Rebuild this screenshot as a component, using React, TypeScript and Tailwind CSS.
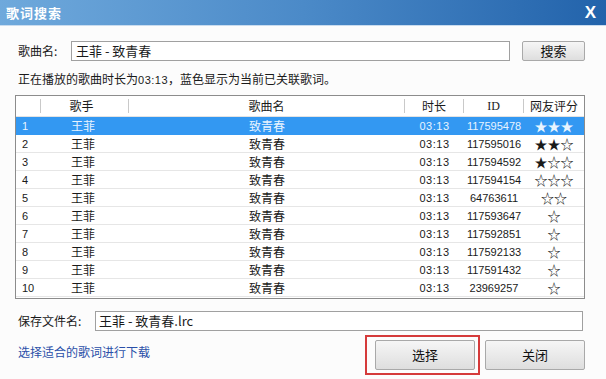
import React from 'react';

const font = { fontFamily: '"Noto Sans CJK SC", "Liberation Sans", sans-serif' };
const num = { fontFamily: '"Liberation Sans", sans-serif' };

type Row = { n: number; id: string; stars: string };

const rows: Row[] = [
  { n: 1, id: '117595478', stars: '★★★' },
  { n: 2, id: '117595016', stars: '★★☆' },
  { n: 3, id: '117594592', stars: '★☆☆' },
  { n: 4, id: '117594154', stars: '☆☆☆' },
  { n: 5, id: '64763611', stars: '☆☆' },
  { n: 6, id: '117593647', stars: '☆' },
  { n: 7, id: '117592851', stars: '☆' },
  { n: 8, id: '117592133', stars: '☆' },
  { n: 9, id: '117591432', stars: '☆' },
  { n: 10, id: '23969257', stars: '☆' },
];

const cols = 'grid grid-cols-[25px_88px_276px_59px_60px_1fr]';
const btnCls =
  'flex items-center justify-center border border-[#a9a9a9] rounded-[2px] bg-gradient-to-b from-[#f6f6f6] to-[#dedede] text-[13px] text-[#111]';

export default function App() {
  return (
    <div style={font} className="w-[606px] h-[379px] bg-[#fcfcfc] flex flex-col overflow-hidden text-[12px] text-[#1a1a1a]">
      {/* title bar */}
      <div className="h-[26px] flex items-center justify-between pl-[6px] pr-[10px] bg-gradient-to-r from-[#6fa9dc] via-[#4b8ac8] to-[#2263ab] border-b border-[#c9dcef]">
        <span className="text-white font-bold text-[13px] tracking-[1px]">歌词搜索</span>
        <span className="text-white font-bold text-[17px]" style={num}>X</span>
      </div>

      <div className="flex flex-col pl-[15px] pr-[21px] pt-[15px]">
        {/* song name row */}
        <div className="flex items-center h-[20px]">
          <span className="w-[56px] pl-[3px]">歌曲名:</span>
          <div className="w-[439px] h-[20px] border border-[#a0a0a0] bg-white flex items-center pl-[4px] text-[13px]">王菲 - 致青春</div>
          <button className={`${btnCls} ml-[12px] w-[63px] h-[20px] text-[12px]`}>搜索</button>
        </div>

        <div className="mt-[10px] pl-[3px] leading-[16px]">
          正在播放的歌曲时长为<span className="text-[11px] tracking-[0.5px]" style={num}>03:13</span>，蓝色显示为当前已关联歌词。
        </div>

        {/* result table */}
        <div className="mt-[7px] w-[570px] h-[204px] border border-[#8c8c8c] bg-white flex flex-col">
          <div className={`${cols} h-[21px] items-center border-b border-[#e3e3e3]`}>
            <div className="h-[14px] border-r border-[#c9c9c9]" />
            <div className="h-[14px] flex items-center justify-center border-r border-[#c9c9c9] pr-[6px]">歌手</div>
            <div className="h-[14px] flex items-center justify-center border-r border-[#c9c9c9]">歌曲名</div>
            <div className="h-[14px] flex items-center justify-center border-r border-[#c9c9c9]">时长</div>
            <div className="h-[14px] flex items-center justify-center border-r border-[#c9c9c9]" style={{ fontFamily: '"Liberation Serif", serif' }}>ID</div>
            <div className="h-[14px] flex items-center justify-center">网友评分</div>
          </div>
          {rows.map(r => {
            const sel = r.n === 1;
            return (
              <div
                key={r.n}
                className={`${cols} h-[18px] items-center border-b ${sel ? 'bg-[#3398f2] text-[#e8f4ff] border-[#3398f2]' : 'border-[#e6e6e6]'}`}
              >
                <div className="pl-[6px] text-[11px]" style={num}>{r.n}</div>
                <div className="text-center pr-[4px]">王菲</div>
                <div className="text-center">致青春</div>
                <div className="text-center text-[11px] tracking-[0.5px]" style={num}>03:13</div>
                <div className="text-center text-[11px]" style={num}>{r.id}</div>
                <div className="text-center text-[13px] leading-[18px]">{r.stars}</div>
              </div>
            );
          })}
        </div>

        {/* save file name */}
        <div className="mt-[12px] flex items-center h-[20px]">
          <span className="w-[80px] pl-[3px]">保存文件名:</span>
          <div className="w-[488px] h-[20px] border border-[#a0a0a0] bg-white flex items-center pl-[3px] text-[13px]">王菲 - 致青春.lrc</div>
        </div>

        <div className="mt-[4px] flex items-start">
          <span className="pl-[3px] mt-[8px] text-[#2a4fa8]">选择适合的歌词进行下载</span>
          <div className="ml-auto flex items-center gap-[5px]">
            <div className="border-2 border-[#d53a3a] p-[3px] pl-[8px] pr-[3px]">
              <button className={`${btnCls} w-[100px] h-[30px]`}>选择</button>
            </div>
            <button className={`${btnCls} w-[100px] h-[30px]`}>关闭</button>
          </div>
        </div>
      </div>
    </div>
  );
}
